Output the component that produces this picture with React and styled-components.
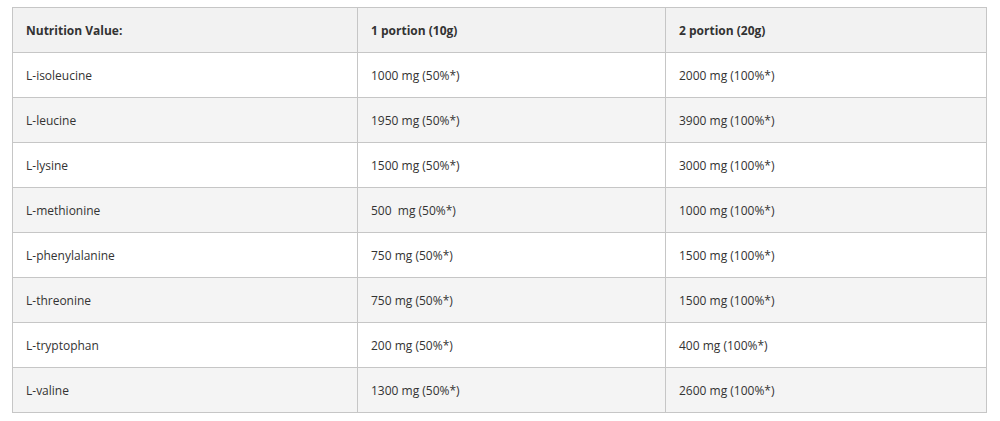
import React from 'react';
import styled, { createGlobalStyle } from 'styled-components';

const GlobalStyle = createGlobalStyle`
  body {
    margin: 0;
    background: #fff;
    font-family: "Open Sans", "Liberation Sans", sans-serif;
  }
`;

const Wrapper = styled.div`
  padding: 7px 13px 0 12px;
`;

const Table = styled.table`
  width: 975px;
  border-collapse: collapse;
  border: 1px solid #cfcfcf;
  font-size: 12px;
  color: #333;
  table-layout: fixed;
`;

const Row = styled.tr`
  height: 45px;
  background: ${p => (p.$shade ? '#f4f4f4' : '#fff')};
`;

const HeadCell = styled.th`
  text-align: left;
  font-weight: 700;
  padding: 0 13px;
  border: 1px solid #c6c6c6;
  background: #f2f2f2;
  color: #333;
`;

const Cell = styled.td`
  padding: 0 13px;
  border: 1px solid #c6c6c6;
  white-space: pre;
`;

const rows = [
  ['L-isoleucine', '1000 mg (50%*)', '2000 mg (100%*)'],
  ['L-leucine', '1950 mg (50%*)', '3900 mg (100%*)'],
  ['L-lysine', '1500 mg (50%*)', '3000 mg (100%*)'],
  ['L-methionine', '500  mg (50%*)', '1000 mg (100%*)'],
  ['L-phenylalanine', '750 mg (50%*)', '1500 mg (100%*)'],
  ['L-threonine', '750 mg (50%*)', '1500 mg (100%*)'],
  ['L-tryptophan', '200 mg (50%*)', '400 mg (100%*)'],
  ['L-valine', '1300 mg (50%*)', '2600 mg (100%*)'],
];

export default function App() {
  return (
    <>
      <GlobalStyle />
      <Wrapper>
        <Table>
          <colgroup>
            <col style={{ width: 345 }} />
            <col style={{ width: 308 }} />
            <col />
          </colgroup>
          <thead>
            <Row>
              <HeadCell>Nutrition Value:</HeadCell>
              <HeadCell>1 portion (10g)</HeadCell>
              <HeadCell>2 portion (20g)</HeadCell>
            </Row>
          </thead>
          <tbody>
            {rows.map((r, i) => (
              <Row key={r[0]} $shade={i % 2 === 1}>
                {r.map((c, j) => (
                  <Cell key={j}>{c}</Cell>
                ))}
              </Row>
            ))}
          </tbody>
        </Table>
      </Wrapper>
    </>
  );
}
